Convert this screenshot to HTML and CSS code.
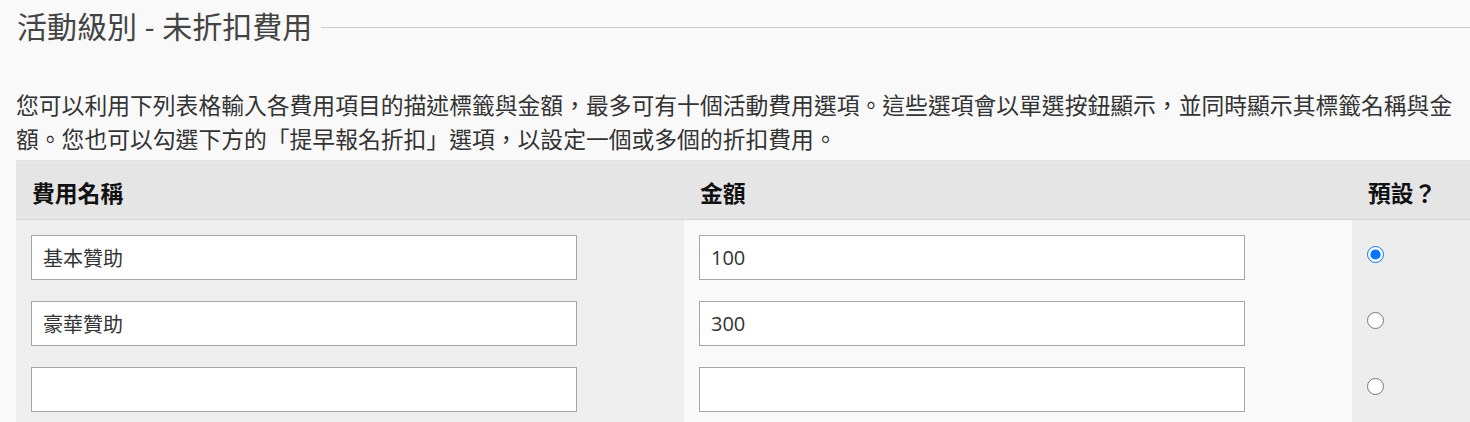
FILE: index.html
```html
<!DOCTYPE html>
<html lang="zh-Hant">

<head>
    <meta charset="UTF-8">
    <meta name="viewport" content="width=device-width, initial-scale=1.0">
    <title>活動級別</title>
    <link rel="stylesheet" href="styles.css">
</head>

<body>
    <div class="section">
        <div class="section-title">
            <h2>活動級別 - 未折扣費用</h2>
        </div>
        <p class="intro">您可以利用下列表格輸入各費用項目的描述標籤與金額，最多可有十個活動費用選項。這些選項會以單選按鈕顯示，並同時顯示其標籤名稱與金額。您也可以勾選下方的「提早報名折扣」選項，以設定一個或多個的折扣費用。</p>
        <table class="fee-table">
            <colgroup>
                <col class="w-label">
                <col class="w-amount">
                <col>
            </colgroup>
            <thead>
                <tr>
                    <th>費用名稱</th>
                    <th>金額</th>
                    <th>預設？</th>
                </tr>
            </thead>
            <tbody>
                <tr>
                    <td class="col-label"><input type="text" value="基本贊助"></td>
                    <td class="col-amount"><input type="text" value="100"></td>
                    <td class="col-default"><input type="radio" name="default" checked></td>
                </tr>
                <tr>
                    <td class="col-label"><input type="text" value="豪華贊助"></td>
                    <td class="col-amount"><input type="text" value="300"></td>
                    <td class="col-default"><input type="radio" name="default"></td>
                </tr>
                <tr>
                    <td class="col-label"><input type="text" value=""></td>
                    <td class="col-amount"><input type="text" value=""></td>
                    <td class="col-default"><input type="radio" name="default"></td>
                </tr>
                <tr>
                    <td class="col-label"><input type="text" value=""></td>
                    <td class="col-amount"><input type="text" value=""></td>
                    <td class="col-default"><input type="radio" name="default"></td>
                </tr>
            </tbody>
        </table>
    </div>
</body>

</html>
```

FILE: styles.css
```css
html,
body {
    margin: 0;
    padding: 0;
    overflow: hidden;
}

body {
    font-family: "Open Sans", "Noto Sans CJK TC", sans-serif;
    background-color: #f9f9f9;
    color: #333;
}

.section {
    padding: 9px 0 0 16px;
}

.section-title {
    display: flex;
    align-items: center;
}

.section-title h2 {
    margin: 0 0 0 1px;
    font-size: 30px;
    font-weight: normal;
    line-height: 36px;
    color: #444;
}

.section-title::after {
    content: "";
    flex: 1;
    border-top: 1px solid #ccc;
    margin-left: 9px;
}

.intro {
    margin: 44px 0 3px;
    font-size: 22.8px;
    line-height: 34px;
    color: #333;
}

.fee-table {
    width: 100%;
    border-collapse: collapse;
    table-layout: fixed;
}

.w-label,
.w-amount {
    width: 668px;
}

.fee-table th {
    text-align: left;
    font-size: 22.8px;
    line-height: 34px;
    font-weight: bold;
    color: #111;
    background-color: #e5e5e5;
    border-top: 1px solid #e0e0e0;
    border-bottom: 1px solid #d6d6d6;
    padding: 16px 16px 8px;
}

.fee-table td {
    vertical-align: top;
    padding: 15px 15px 6px;
}

.col-label {
    background-color: #efefef;
}

.col-amount {
    background-color: #f9f9f9;
}

.col-default {
    background-color: #ededed;
}

.fee-table input[type="text"] {
    display: block;
    width: 546px;
    height: 45px;
    box-sizing: border-box;
    border: 1px solid #a6a6a6;
    border-radius: 0;
    padding: 0 11px;
    background-color: #fff;
    font-family: "Open Sans", "Noto Sans CJK TC", sans-serif;
    font-size: 20px;
    color: #333;
}

.fee-table input[type="radio"] {
    display: block;
    width: 17px;
    height: 17px;
    margin: 11px 0 0 0;
}
```
